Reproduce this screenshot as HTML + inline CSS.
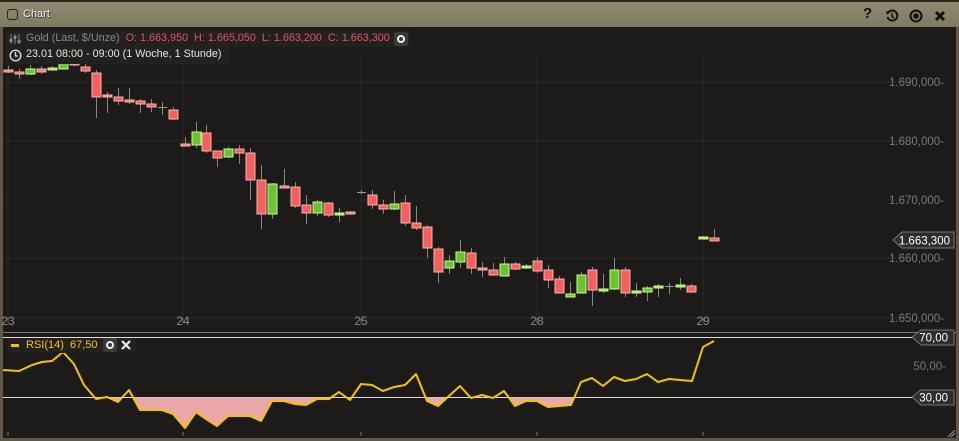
<!DOCTYPE html>
<html><head><meta charset="utf-8"><style>
*{margin:0;padding:0;box-sizing:border-box}
body{width:959px;height:441px;overflow:hidden;background:#5f5a47;font-family:"Liberation Sans",sans-serif}
.t{position:absolute;left:0;top:0;width:959px;height:27px;background:linear-gradient(#8f8a70,#7f7a62);border-top:2px solid #2a2922}
.c{position:absolute;left:3px;top:27px;width:953px;height:411px;background:#1c1b1a}
.tl{position:absolute;font-size:12px;color:#ddd;white-space:nowrap}
</style></head><body>
<div class="t">
<div style="position:absolute;left:7px;top:7px;width:11px;height:11px;border:1.5px solid #222;border-radius:3px"></div>
<div class="tl" style="left:23px;top:6px;color:#eee;text-shadow:1px 1px 0 #333;font-size:11px">Chart</div>
<div style="position:absolute;left:863px;top:3px;font-size:15px;font-weight:bold;color:#111">?</div>
<svg style="position:absolute;left:885px;top:7px" width="14" height="14" viewBox="0 0 14 14"><path d="M3 4 A5 5 0 1 1 2.5 8" fill="none" stroke="#111" stroke-width="2"/><path d="M1 2 L5 3 L2 6Z" fill="#111"/><path d="M7 4 V7.5 L9 9" fill="none" stroke="#111" stroke-width="1.5"/></svg>
<svg style="position:absolute;left:909px;top:7px" width="14" height="14"><circle cx="7" cy="7" r="5.5" fill="none" stroke="#111" stroke-width="2"/><circle cx="7" cy="7" r="2.8" fill="#111"/></svg>
<svg style="position:absolute;left:934px;top:8px" width="12" height="12"><path d="M2 2L10 10M10 2L2 10" stroke="#111" stroke-width="3"/></svg>
</div>
<div class="c"></div>
<svg id="s" style="position:absolute;left:0;top:0" width="959" height="441"></svg>
<div style="position:absolute;left:6px;top:30px;width:405px;height:17px;background:#222120"></div>
<div style="position:absolute;left:6px;top:47px;width:223px;height:17px;background:#222120"></div>
<svg style="position:absolute;left:9px;top:33px" width="12" height="12"><path d="M2 1V11M6 1V11M10 1V11" stroke="#888" stroke-width="1"/><rect x="0.5" y="6" width="3" height="3" fill="#888"/><rect x="4.5" y="3" width="3" height="3" fill="#888"/><rect x="8.5" y="7" width="3" height="3" fill="#888"/></svg>
<div class="tl" style="left:26px;top:32px;font-size:10.8px;color:#8a8a8a">Gold (Last, $/Unze) <span style="color:#e8525a">&nbsp;O: 1.663,950&nbsp; H: 1.665,050&nbsp; L: 1.663,200&nbsp; C: 1.663,300</span></div>
<div style="position:absolute;left:394px;top:32px;width:14px;height:14px;background:#3a3938;border-radius:2px"></div>
<svg style="position:absolute;left:396px;top:34px" width="10" height="10"><circle cx="5" cy="5" r="3" fill="none" stroke="#eee" stroke-width="2"/></svg>
<svg style="position:absolute;left:9px;top:49px" width="13" height="13"><circle cx="6.5" cy="6.5" r="5.3" fill="none" stroke="#ddd" stroke-width="1.4"/><path d="M6.5 3V7H9" fill="none" stroke="#ddd" stroke-width="1.3"/></svg>
<div class="tl" style="left:26px;top:48px;font-size:10.8px;color:#e6e6e6">23.01 08:00 - 09:00 (1 Woche, 1 Stunde)</div>
<div style="position:absolute;left:8px;top:338px;width:128px;height:15px;background:#222120"></div>
<div style="position:absolute;left:11px;top:344px;width:8px;height:3px;background:#f5c400"></div>
<div class="tl" style="left:26px;top:339px;font-size:11px;color:#f5c400">RSI(14)&nbsp; 67,50</div>
<div style="position:absolute;left:103px;top:338px;width:14px;height:14px;background:#3a3938;border-radius:2px"></div>
<svg style="position:absolute;left:105px;top:340px" width="10" height="10"><circle cx="5" cy="5" r="3" fill="none" stroke="#eee" stroke-width="2"/></svg>
<svg style="position:absolute;left:120px;top:339px" width="12" height="12"><path d="M2 2L10 10M10 2L2 10" stroke="#eee" stroke-width="2.2"/></svg>
<script>
const s=document.getElementById('s');let h='';
[82,141,200,258,318].forEach(y=>h+=`<line x1="3" x2="905" y1="${y}" y2="${y}" stroke="#2a2928"/>`);
[8,183,361,537,703].forEach(x=>{h+=`<line x1="${x}" x2="${x}" y1="58" y2="318" stroke="#2a2928"/><line x1="${x}" x2="${x}" y1="318" y2="323" stroke="#666"/><line x1="${x}" x2="${x}" y1="432" y2="436" stroke="#777"/>`;});
[['23',8],['24',183],['25',361],['28',537],['29',703]].forEach(([t,x])=>h+=`<text x="${x}" y="325" font-size="12" fill="#8a8a8a" text-anchor="middle" font-family="Liberation Sans">${t}</text>`);
[['1.690,000',86],['1.680,000',145],['1.670,000',204],['1.660,000',262],['1.650,000',322]].forEach(([t,y])=>h+=`<text x="944" y="${y}" font-size="11.5" fill="#7a7a7a" text-anchor="end" font-family="Liberation Sans">${t}-</text>`);
const C=[[8,'p',70,71,66,73],[19,'r',72,73,69,79],[30,'g',69,73,65,75],[41,'p',69,71,66,74],[52,'l',68,69,66,70],[63,'g',62,68,58,69],[74,'p',63,64,61,66],[85,'r',67,70,63,73],[96,'r',73,96,70,118],[107,'p',95,96,92,113],[118,'r',97,100,88,105],[129,'p',100,101,88,104],[140,'r',101,103,99,113],[151,'r',104,106,99,112],[162,'d',107,107,102,115],[173,'r',110,118,107,120],
[185,'p',144,145,137,145],[196,'g',132,144,122,148],[206,'r',133,150,125,153],[217,'r',151,157,151,167],[228,'g',149,156,147,158],[239,'r',149,152,145,164],[250,'r',153,179,148,200],[261,'r',180,213,165,229],[272,'g',184,213,183,219],[284,'p',186,187,169,188],[295,'r',187,205,182,208],
[306,'r',205,212,195,224],[317,'g',202,212,200,216],[328,'r',203,214,202,217],[339,'l',213,214,208,222],[350,'p',212,213,211,215],[361,'d',192,192,190,194],[372,'r',195,204,190,209],[383,'r',205,208,200,214],[394,'g',204,208,191,210],[405,'r',203,222,195,226],[416,'r',223,227,206,230],[427,'r',227,247,225,258],[438,'r',249,271,247,283],[449,'g',261,267,255,274],[460,'g',252,261,240,268],[471,'r',253,267,248,274],[482,'p',268,269,262,277],[493,'r',270,274,263,276],[504,'g',264,275,257,276],[515,'r',264,268,262,270],[526,'l',266,267,264,269],[537,'r',261,270,257,273],[548,'r',270,279,265,288],[559,'r',279,292,276,292],[570,'g',294,296,282,297],[581,'g',275,292,272,293],[592,'r',270,289,267,306],[603,'l',289,290,274,293],[614,'g',270,288,258,290],[625,'r',270,292,267,297],[636,'l',291,292,283,297],[647,'g',288,291,286,301],[658,'l',286,287,284,297],[669,'d',286,286,283,294],[680,'l',285,286,278,290],[691,'r',286,291,284,293],[703,'l',237,238,236,239],[714,'r',238,240,229,241]];
C.forEach(([x,t,o,c,hi,lo])=>{h+=`<line x1="${x+.5}" x2="${x+.5}" y1="${hi}" y2="${lo}" stroke="#8a8684"/>`;
if(t=='d'){h+=`<line x1="${x-4}" x2="${x+5}" y1="${o+.5}" y2="${o+.5}" stroke="#999"/>`;return;}
const f={r:'#f06262',p:'#f07878',g:'#6cc232',l:'#9ee86a'}[t],st={r:'#ffb0a8',p:'#ffb8b0',g:'#c8ff90',l:'#c8ff90'}[t];
const hh=Math.max(c-o,1);h+=`<rect x="${x-4}" y="${o}" width="9" height="${hh+1}" fill="${f}" stroke="${st}" stroke-width="1"/>`;});
h+=`<path d="M893 240L902 232H954V248H902Z" fill="#2e2d2b" stroke="#777"/><text x="950" y="244.5" font-size="11.5" fill="#fff" text-anchor="end" font-family="Liberation Sans">1.663,300</text>`;
h+=`<line x1="3" x2="956" y1="332.5" y2="332.5" stroke="#777"/><line x1="3" x2="915" y1="337.5" y2="337.5" stroke="#ddd"/><line x1="3" x2="915" y1="397.5" y2="397.5" stroke="#ddd"/>`;
h+=`<path d="M912 337L921 330H954V345H921Z" fill="#2e2d2b" stroke="#777"/><text x="948" y="341.5" font-size="11.5" fill="#fff" text-anchor="end" font-family="Liberation Sans">70,00</text>`;
h+=`<path d="M912 397L921 390H954V405H921Z" fill="#2e2d2b" stroke="#777"/><text x="948" y="401.5" font-size="11.5" fill="#fff" text-anchor="end" font-family="Liberation Sans">30,00</text>`;
h+=`<text x="946" y="370" font-size="11.5" fill="#777" text-anchor="end" font-family="Liberation Sans">50,00-</text>`;
const R=[[3,370],[19,371],[32,365],[42,362],[52,361],[63,352],[74,364],[84,385],[96,399],[107,397],[118,402],[129,390],[140,410],[151,410],[162,410],[173,414],[185,428],[196,412],[206,419],[217,426],[228,416],[239,416],[250,416],[261,421],[272,401],[284,401],[295,404],[306,405],[317,399],[329,399],[339,392],[350,400],[361,384],[372,385],[383,391],[394,387],[405,385],[416,374],[427,401],[438,406],[449,396],[460,386],[471,398],[482,395],[493,398],[504,391],[515,406],[526,401],[537,401],[548,407],[559,406],[571,405],[581,382],[592,378],[603,386],[614,377],[625,381],[636,379],[647,374],[658,382],[669,379],[680,380],[692,381],[703,347],[714,341]];
const pts=R.map(p=>p.join(',')).join(' ');
h+=`<clipPath id="cl"><rect x="0" y="397.5" width="959" height="40"/></clipPath><polygon points="3,397.5 ${pts} 714,397.5" fill="#eaa8aa" clip-path="url(#cl)"/>`;
h+=`<polyline points="${pts}" fill="none" stroke="#f5c400" stroke-width="2" stroke-linejoin="round"/>`;
h+=`<path d="M948 437L955 430M951 437L955 433" stroke="#999"/>`;
s.innerHTML=h;
</script>
</body></html>
